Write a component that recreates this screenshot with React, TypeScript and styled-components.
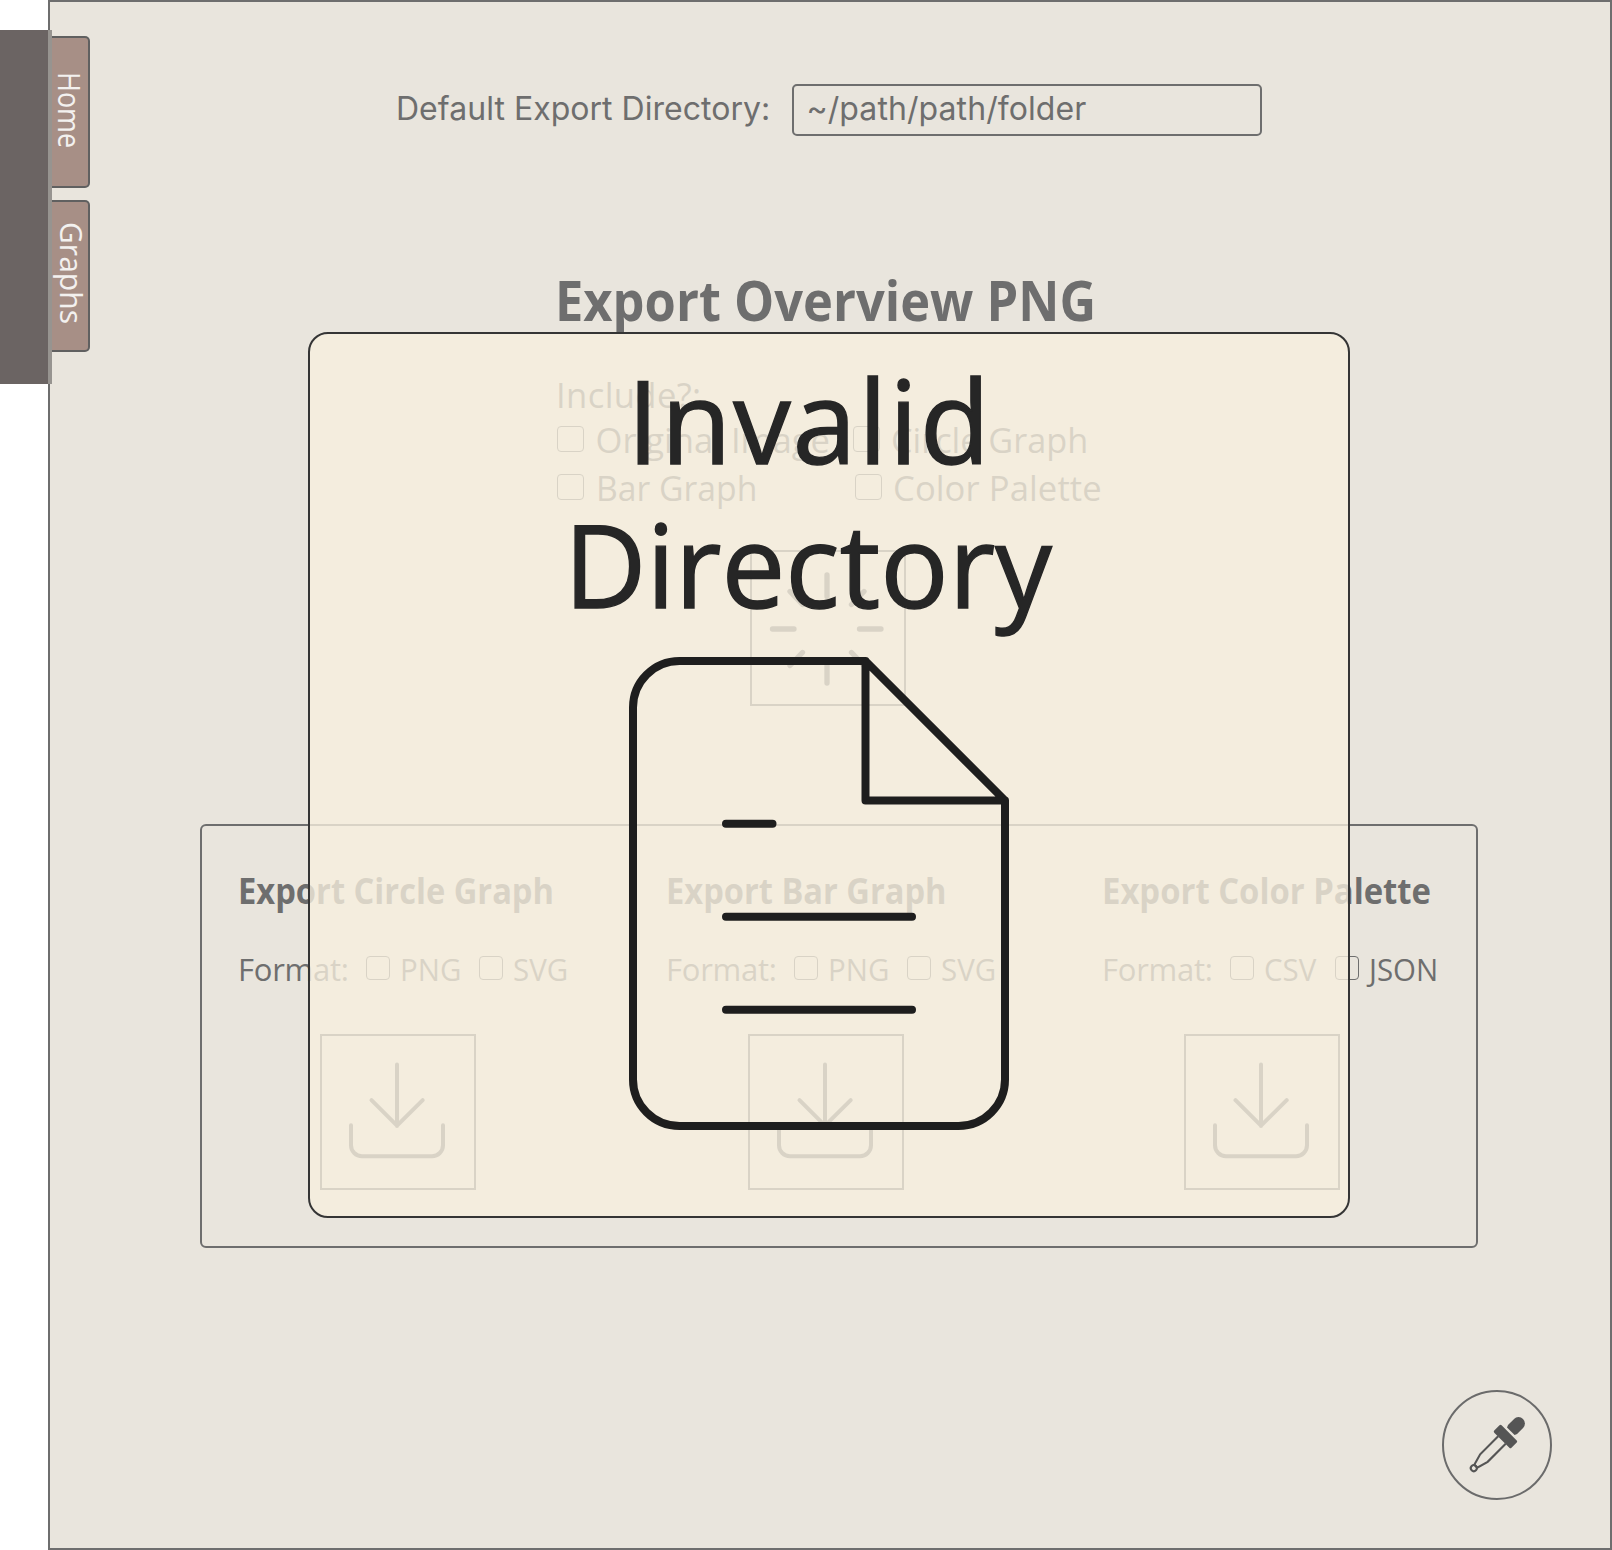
import React from "react";
import styled, { createGlobalStyle } from "styled-components";

const ink = "#6e6e6e";
const paper = "#e9e5dd";

const GlobalStyle = createGlobalStyle`
  *, *::before, *::after { box-sizing: border-box; }
  body { margin: 0; background: #fff; font-family: "Open Sans", "Noto Sans", sans-serif; color: ${ink}; }
`;

const Shell = styled.div`
  position: relative;
  display: flex;
  align-items: flex-start;
  width: 1612px;
  height: 1550px;
  overflow: hidden;
`;

const Rail = styled.aside`
  flex: none;
  z-index: 1;
  width: 52px;
  height: 354px;
  margin: 30px -4px 0 0;
  background: #6b6463;
  border-right: 4px solid #979490;
`;

const Page = styled.div`
  flex: none;
  display: flex;
  width: 1564px;
  height: 1550px;
  border: 2px solid ${ink};
  background: ${paper};
`;

const Tabs = styled.nav`
  flex: none;
  display: flex;
  flex-direction: column;
  gap: 12px;
  width: 40px;
  padding-top: 34px;
`;

const Tab = styled.a<{ $start: number; $shift: number; $squeeze: number }>`
  height: 152px;
  padding-top: ${(p) => p.$start}px;
  border: 2px solid #606060;
  border-left: 0;
  border-radius: 0 5px 5px 0;
  background: #a78f86;
  color: #f3f1ef;
  writing-mode: vertical-rl;
  font-size: 31px;
  line-height: 34px;
  white-space: nowrap;

  span {
    display: block;
    margin-right: ${(p) => p.$shift}px;
    transform: scaleY(${(p) => p.$squeeze});
    transform-origin: top;
  }
`;

const Main = styled.main`
  display: flex;
  flex-direction: column;
  width: 1520px;
  padding-top: 82px;
`;

const DirectoryRow = styled.div`
  display: flex;
  height: 52px;
  margin-left: 306px;
  font-family: Inter, sans-serif;
  font-size: 32px;
  line-height: 45px;
  white-space: nowrap;
`;

const DirectoryLabel = styled.label`
  width: 396px;
  padding-top: 2px;
  letter-spacing: 0.03px;
`;

const DirectoryField = styled.div`
  width: 470px;
  height: 52px;
  padding-left: 12.5px;
  border: 2px solid ${ink};
  border-radius: 5px;
  letter-spacing: 0.08px;
`;

const Overview = styled.section`
  display: flex;
  flex-direction: column;
  width: 600px;
  margin: 131px 0 0 467px;
`;

const Text = styled.span<{ $track?: number; $squeeze?: number }>`
  display: inline-block;
  margin-top: 1px;
  letter-spacing: ${(p) => p.$track ?? 0}px;
  white-space: nowrap;
  transform: scaleX(${(p) => p.$squeeze ?? 1});
  transform-origin: left;
`;

const OverviewTitle = styled.h1`
  margin: 0 0 40px -2px;
  font-size: 55px;
  line-height: 66px;
  font-weight: 700;
  white-space: nowrap;
  transform: scaleX(0.92);
  transform-origin: left;
`;

const Prompt = styled.div`
  margin-left: -1px;
  font-size: 34.6px;
  line-height: 44px;
  letter-spacing: 0.4px;
`;

const OptionRow = styled.div<{ $gap?: number }>`
  display: flex;
  height: 44px;
  margin-top: ${(p) => p.$gap ?? 0}px;
  font-size: 34.6px;
  line-height: 44px;
`;

const Option = styled.label<{ $slot?: number; $gap: number }>`
  flex: none;
  display: flex;
  align-items: center;
  gap: ${(p) => p.$gap}px;
  width: ${(p) => (p.$slot ? `${p.$slot}px` : "auto")};
`;

const Box = styled.span<{ $w: number; $h: number }>`
  flex: none;
  width: ${(p) => p.$w}px;
  height: ${(p) => p.$h}px;
  border: 1px solid ${ink};
  border-radius: 4px;
`;

const IconButton = styled.button<{ $left: number; $top: number }>`
  display: block;
  width: 156px;
  height: 156px;
  margin: ${(p) => p.$top}px 0 0 ${(p) => p.$left}px;
  padding: 0;
  border: 2px solid ${ink};
  background: none;
  color: ${ink};
  svg { display: block; margin: -2px; }
`;

const ExportPanel = styled.section`
  display: grid;
  grid-template-columns: 428px 436px 1fr;
  width: 1278px;
  height: 424px;
  margin: 118px 0 0 110px;
  padding: 41px 0 0 35px;
  border: 2px solid ${ink};
  border-radius: 6px;
`;

const CardTitle = styled.h2<{ $squeeze: number }>`
  margin: 0 0 37px 1px;
  font-size: 35px;
  line-height: 48px;
  font-weight: 700;
  white-space: nowrap;
  transform: scaleX(${(p) => p.$squeeze});
  transform-origin: left;
`;

const FormatRow = styled.div`
  display: flex;
  height: 32px;
  font-size: 31px;
  line-height: 32px;
`;

const FormatLabel = styled.span`
  flex: none;
  width: 129px;
  padding: 1px 0 0 1px;
  letter-spacing: -0.25px;
`;

const Picker = styled.button`
  align-self: flex-end;
  display: grid;
  place-items: center;
  width: 110px;
  height: 110px;
  margin: 142px 58px 0 0;
  padding: 0;
  border: 2px solid #6b6b6b;
  border-radius: 50%;
  background: none;
`;

const Dialog = styled.div`
  position: absolute;
  left: 308px;
  top: 332px;
  z-index: 2;
  display: flex;
  flex-direction: column;
  width: 1042px;
  height: 886px;
  padding-top: 14px;
  border: 2px solid #353535;
  border-radius: 20px;
  background: rgba(246, 238, 222, 0.79);
  background-clip: padding-box;
`;

const Message = styled.div<{ $left: number; $squeeze: number; $track: number }>`
  width: max-content;
  margin-left: ${(p) => p.$left}px;
  color: #262626;
  font-size: 115px;
  line-height: 144px;
  letter-spacing: ${(p) => p.$track}px;
  -webkit-text-stroke: 1.4px #262626;
  white-space: nowrap;
  transform: scaleX(${(p) => p.$squeeze});
  transform-origin: left;
`;

const DocumentIcon = styled.svg`
  display: block;
  width: 384px;
  height: 480px;
  margin: 17px 0 0 317px;
`;

function DownloadIcon() {
  return (
    <svg width="156" height="156" fill="none" stroke="currentColor" strokeWidth="4" strokeLinecap="round" strokeLinejoin="round">
      <path d="M77 30.500v61.500M51.500 66.200 77 91.700 102.700 66.200M31 91.200v20a11 11 0 0 0 11 11h70a11 11 0 0 0 11-11V91.200" />
    </svg>
  );
}

function SpinnerIcon() {
  return (
    <svg width="156" height="156" fill="none" stroke="currentColor" strokeWidth="5.300" strokeLinecap="round">
      <path d="M77 25v21.500M77 111.500v21.500M22.500 79h21.500M109.500 79H131M40 41.500 52.500 54.500M101.500 54.500 114 41.500M52.500 102.500 40 115.500M101.500 102.500 114 115.500" />
    </svg>
  );
}

function DropperIcon() {
  return (
    <svg width="74" height="74" fill="none">
      <g transform="translate(37 37) rotate(45)">
        <path d="M-5.400-19.500-6.400-22v-8.500a6.400 6.300 0 0 1 12.800 0V-22L5.400-19.500z" fill="#555" />
        <rect x="-12.200" y="-17.200" width="24.400" height="10.400" rx="1.500" fill="#555" />
        <path d="M-5.300-7V18.500l3.200 11.500h4.200L5.300 18.500V-7" stroke="#555" strokeWidth="2.100" />
        <circle cx="0" cy="32.800" r="3" stroke="#555" strokeWidth="2.100" />
      </g>
    </svg>
  );
}

type Format = { name: string; slot?: number };

function ExportCard({ title, squeeze, formats }: { title: string; squeeze: number; formats: Format[] }) {
  return (
    <div>
      <CardTitle $squeeze={squeeze}>{title}</CardTitle>
      <FormatRow>
        <FormatLabel>Format:</FormatLabel>
        {formats.map((f) => (
          <Option key={f.name} $slot={f.slot} $gap={10}>
            <Box $w={24} $h={24} />
            <Text $squeeze={0.95}>{f.name}</Text>
          </Option>
        ))}
      </FormatRow>
      <IconButton $left={83} $top={50} aria-label={title}><DownloadIcon /></IconButton>
    </div>
  );
}

export default function App() {
  return (
    <Shell>
      <GlobalStyle />
      <Rail />
      <Page>
        <Tabs>
          <Tab $start={34} $shift={1} $squeeze={0.87}><span>Home</span></Tab>
          <Tab $start={20} $shift={-1} $squeeze={0.97}><span>Graphs</span></Tab>
        </Tabs>
        <Main>
          <DirectoryRow>
            <DirectoryLabel>Default Export Directory:</DirectoryLabel>
            <DirectoryField>~/path/path/folder</DirectoryField>
          </DirectoryRow>
          <Overview>
            <OverviewTitle>Export Overview PNG</OverviewTitle>
            <Prompt>Include?:</Prompt>
            <OptionRow>
              <Option $slot={296} $gap={11.5}><Box $w={27} $h={26} /><Text>Original Image</Text></Option>
              <Option $gap={10.5}><Box $w={27} $h={26} /><Text $squeeze={0.99}>Circle Graph</Text></Option>
            </OptionRow>
            <OptionRow $gap={4}>
              <Option $slot={298} $gap={11.5}><Box $w={27} $h={26} /><Text $squeeze={0.975}>Bar Graph</Text></Option>
              <Option $gap={11}><Box $w={27} $h={26} /><Text $track={0.1}>Color Palette</Text></Option>
            </OptionRow>
            <IconButton $left={193} $top={41} aria-label="Export overview"><SpinnerIcon /></IconButton>
          </Overview>
          <ExportPanel>
            <ExportCard title="Export Circle Graph" squeeze={0.933} formats={[{ name: "PNG", slot: 113 }, { name: "SVG" }]} />
            <ExportCard title="Export Bar Graph" squeeze={0.932} formats={[{ name: "PNG", slot: 113 }, { name: "SVG" }]} />
            <ExportCard title="Export Color Palette" squeeze={0.938} formats={[{ name: "CSV", slot: 105 }, { name: "JSON" }]} />
          </ExportPanel>
          <Picker aria-label="Pick color"><DropperIcon /></Picker>
        </Main>
      </Page>
      <Dialog>
        <Message $left={317} $squeeze={1} $track={1.8}>Invalid</Message>
        <Message $left={254} $squeeze={0.988} $track={0}>Directory</Message>
        <DocumentIcon viewBox="0 0 384 480" fill="none" stroke="#1e1e1e" strokeWidth="8" strokeLinejoin="round" strokeLinecap="round">
          <path d="M238.500 8H52.500A46.500 46.500 0 0 0 6 54.500v372A46.500 46.500 0 0 0 52.500 473h279a46.500 46.500 0 0 0 46.500-46.500V147.500zM238.500 8v139.500H378M99 170.750h46.500M99 263.750h186M99 356.750h186" />
        </DocumentIcon>
      </Dialog>
    </Shell>
  );
}
